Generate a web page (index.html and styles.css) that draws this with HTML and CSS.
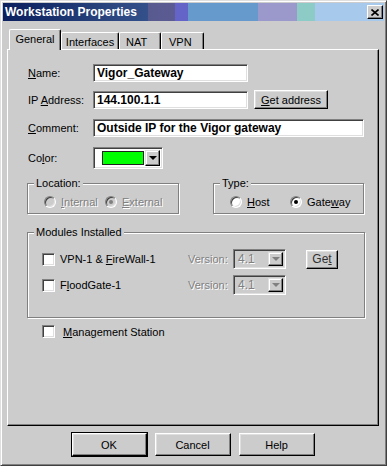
FILE: index.html
```html
<!DOCTYPE html>
<html lang="en">
<head>
  <meta charset="UTF-8" />
  <title>Workstation Properties</title>
  <link rel="stylesheet" href="styles.css">
</head>
<body>
  <div class="window">
    <div class="titlebar">
      <span class="title">Workstation Properties</span>
      <span class="close">
        <svg width="8" height="7" viewBox="0 0 8 7"><path d="M0.5 0.5 L7.5 6.5 M7.5 0.5 L0.5 6.5" stroke="#000" stroke-width="1.6"/></svg>
      </span>
    </div>

    <div class="content">
      <div class="tabs">
        <div class="tab active tab-general">General</div>
        <div class="tab tab-interfaces">Interfaces</div>
        <div class="tab tab-nat">NAT</div>
        <div class="tab tab-vpn">VPN</div>
      </div>

      <div class="panel">
        <div class="row row-name">
          <span class="lbl"><u>N</u>ame:</span>
          <input class="field field-short" value="Vigor_Gateway">
        </div>
        <div class="row row-ip">
          <span class="lbl">IP <u>A</u>ddress:</span>
          <input class="field field-short" value="144.100.1.1">
          <div class="btn btn-getaddr"><u>G</u>et address</div>
        </div>
        <div class="row row-comment">
          <span class="lbl"><u>C</u>omment:</span>
          <input class="field field-long" value="Outside IP for the Vigor gateway">
        </div>
        <div class="row row-color">
          <span class="lbl">Co<u>l</u>or:</span>
          <div class="combo-color">
            <span class="swatch"></span>
            <span class="drop"><span class="arrow"></span></span>
          </div>
        </div>

        <div class="groups">
          <div class="group group-location">
            <div class="legend">Location:</div>
            <div class="opts">
              <div class="opt opt-first disabled"><span class="radio off"></span><span class="opt-text"><u>I</u>nternal</span></div>
              <div class="opt disabled"><span class="radio off checked"></span><span class="opt-text"><u>E</u>xternal</span></div>
            </div>
          </div>
          <div class="group group-type">
            <div class="legend">Type:</div>
            <div class="opts">
              <div class="opt opt-first"><span class="radio"></span><span class="opt-text"><u>H</u>ost</span></div>
              <div class="opt"><span class="radio checked"></span><span class="opt-text">Gate<u>w</u>ay</span></div>
            </div>
          </div>
        </div>

        <div class="group group-modules">
          <div class="legend">Modules Installed</div>
          <div class="module">
            <span class="check"></span>
            <span class="mod-name">VPN-1 &amp; <u>F</u>ireWall-1</span>
            <span class="mod-ver disabled">Version:</span>
            <div class="combo-ver">
              <span class="ver-text">4.1</span>
              <span class="drop"><span class="arrow grey"></span></span>
            </div>
            <div class="btn btn-get">Ge<u>t</u></div>
          </div>
          <div class="module module-2">
            <span class="check"></span>
            <span class="mod-name">F<u>l</u>oodGate-1</span>
            <span class="mod-ver disabled">Version:</span>
            <div class="combo-ver">
              <span class="ver-text">4.1</span>
              <span class="drop"><span class="arrow grey"></span></span>
            </div>
          </div>
        </div>

        <div class="row row-mgmt">
          <span class="check"></span>
          <span class="mgmt-text"><u>M</u>anagement Station</span>
        </div>
      </div>

      <div class="buttons">
        <div class="btn btn-main btn-default">OK</div>
        <div class="btn btn-main">Cancel</div>
        <div class="btn btn-main">Help</div>
      </div>
    </div>
  </div>
</body>
</html>
```

FILE: styles.css
```css
html, body {
  margin: 0;
  padding: 0;
  background-color: #cccccc;
  font-family: "Liberation Sans", Arial, sans-serif;
  font-size: 11px;
  color: #000000;
}
.window {
  width: 387px;
  height: 466px;
  box-sizing: border-box;
  border: 1px solid;
  border-color: #dfdfdf #404040 #404040 #dfdfdf;
  box-shadow: inset 1px 1px #ffffff, inset -1px -1px #808080;
  padding: 2px;
}
.titlebar {
  height: 18px;
  display: flex;
  align-items: center;
  justify-content: space-between;
  background: linear-gradient(to right,
    #0a1f5e 0, #1b3570 60px, #2c4680 110px, #33508a 145px,
    #575a8f 145px, #5c5b93 172px,
    #6464c8 172px, #6464c8 185px,
    #6699cc 185px, #6699cc 255px,
    #9b99cb 255px, #9b99cb 294px,
    #8ccbc6 294px, #8ccbc6 312px,
    #a6c9ec 312px);
}
.title {
  color: #ffffff;
  font-weight: bold;
  font-size: 12px;
  padding-left: 2px;
}
.close {
  width: 14px;
  height: 12px;
  margin-right: 1px;
  background: #cccccc;
  border: 1px solid;
  border-color: #ffffff #000000 #000000 #ffffff;
  box-shadow: inset -1px -1px #808080;
  display: flex;
  align-items: center;
  justify-content: center;
}
.content {
  padding: 0 5px 0 4px;
}
.tabs {
  display: flex;
  align-items: flex-end;
  height: 20px;
  margin-top: 8px;
  padding-left: 2px;
}
.tab {
  height: 17px;
  box-sizing: border-box;
  border: 1px solid;
  border-bottom: none;
  border-color: #ffffff #000000 #ffffff #ffffff;
  box-shadow: inset -1px 0 #808080;
  border-radius: 2px 2px 0 0;
  display: flex;
  align-items: center;
  justify-content: center;
  padding-top: 2px;
}
.tab.active {
  height: 21px;
  margin-bottom: -1px;
  position: relative;
  background: #cccccc;
  padding-top: 0;
  padding-bottom: 2px;
}
.tab-general { width: 52px; }
.tab-interfaces { width: 58px; }
.tab-nat { width: 42px; justify-content: flex-start; padding-left: 6px; }
.tab-vpn { width: 43px; justify-content: flex-start; padding-left: 7px; }

.panel {
  height: 377px;
  box-sizing: border-box;
  border: 1px solid;
  border-color: #ffffff #000000 #000000 #ffffff;
  box-shadow: inset -1px -1px #808080;
  padding: 14px 0 0 20px;
}
.row {
  display: flex;
  align-items: center;
}
.lbl {
  width: 65px;
}
.row-name { height: 18px; }
.row-ip { height: 19px; margin-top: 8px; }
.row-comment { height: 18px; margin-top: 10px; }
.row-color { height: 22px; margin-top: 10px; }

.field {
  height: 18px;
  box-sizing: border-box;
  border: 1px solid;
  border-color: #808080 #ffffff #ffffff #808080;
  box-shadow: inset 1px 1px #404040, inset -1px -1px #dfdfdf;
  background: #ffffff;
  padding: 0 0 0 3px;
  margin: 0;
  font-family: "Liberation Sans", Arial, sans-serif;
  font-size: 12px;
  font-weight: bold;
  color: #000000;
  outline: none;
}
.field-short { width: 155px; }
.field-long { width: 271px; }

.btn {
  background: #cccccc;
  box-sizing: border-box;
  border: 1px solid;
  border-color: #ffffff #000000 #000000 #ffffff;
  box-shadow: inset -1px -1px #808080, inset 1px 1px #dfdfdf;
  display: flex;
  align-items: center;
  justify-content: center;
}
.btn-getaddr {
  width: 74px;
  height: 19px;
  margin-left: 6px;
}

.combo-color {
  width: 70px;
  height: 22px;
  box-sizing: border-box;
  border: 1px solid;
  border-color: #808080 #ffffff #ffffff #808080;
  box-shadow: inset 1px 1px #404040, inset -1px -1px #dfdfdf;
  background: #ffffff;
  display: flex;
  align-items: center;
  justify-content: space-between;
  padding: 2px 2px 2px 8px;
}
.swatch {
  width: 42px;
  height: 14px;
  box-sizing: border-box;
  background: #00ff00;
  border: 1px solid #202020;
}
.drop {
  width: 15px;
  height: 100%;
  box-sizing: border-box;
  background: #cccccc;
  border: 1px solid;
  border-color: #dfdfdf #000000 #000000 #dfdfdf;
  box-shadow: inset -1px -1px #808080, inset 1px 1px #ffffff;
  display: flex;
  align-items: center;
  justify-content: center;
}
.arrow {
  width: 0;
  height: 0;
  border-left: 4px solid transparent;
  border-right: 4px solid transparent;
  border-top: 4px solid #000000;
}
.arrow.grey {
  border-top-color: #808080;
}

.groups {
  display: flex;
  margin: 14px 0 0 -1px;
  gap: 34px;
}
.group {
  box-sizing: border-box;
  border: 1px solid #808080;
  box-shadow: inset 1px 1px #ffffff, 1px 1px #ffffff;
}
.legend {
  width: fit-content;
  margin: -7px 0 0 6px;
  padding: 0 2px;
  height: 13px;
  line-height: 13px;
  background: #cccccc;
}
.group-location { width: 152px; height: 31px; }
.group-type { width: 151px; height: 31px; }
.opts {
  display: flex;
  align-items: center;
  height: 12px;
  margin-top: 6px;
  padding-left: 16px;
}
.opt {
  display: flex;
  align-items: center;
}
.opt-first { width: 61px; }
.group-type .opt-first { width: 60px; }
.opt-text { margin-left: 5px; }
.radio {
  width: 12px;
  height: 12px;
  box-sizing: border-box;
  border-radius: 50%;
  border: 1px solid;
  border-color: #808080 #ffffff #ffffff #808080;
  box-shadow: inset 1px 1px #404040, inset -1px -1px #dfdfdf;
  background: #ffffff;
  display: flex;
  align-items: center;
  justify-content: center;
}
.radio.checked::after {
  content: "";
  width: 4px;
  height: 4px;
  border-radius: 50%;
  background: #000000;
}
.radio.off {
  background: #cccccc;
}
.radio.off.checked::after {
  background: #808080;
}
.disabled {
  color: #808080;
  text-shadow: 1px 1px #ffffff;
}

.group-modules {
  width: 338px;
  height: 86px;
  margin: 18px 0 0 -1px;
}
.module {
  display: flex;
  align-items: center;
  height: 20px;
  margin-top: 10px;
  padding-left: 14px;
}
.module-2 { margin-top: 6px; }
.check {
  width: 13px;
  height: 13px;
  box-sizing: border-box;
  border: 1px solid;
  border-color: #808080 #ffffff #ffffff #808080;
  box-shadow: inset 1px 1px #404040, inset -1px -1px #dfdfdf;
  background: #ffffff;
}
.mod-name {
  width: 128px;
  margin-left: 5px;
}
.mod-ver { width: 45px; }
.combo-ver {
  width: 53px;
  height: 20px;
  box-sizing: border-box;
  border: 1px solid;
  border-color: #808080 #ffffff #ffffff #808080;
  box-shadow: inset 1px 1px #404040, inset -1px -1px #dfdfdf;
  background: #cccccc;
  display: flex;
  align-items: center;
  justify-content: space-between;
  padding: 2px 2px 2px 4px;
}
.ver-text {
  color: #808080;
  text-shadow: 1px 1px #ffffff;
  font-size: 12px;
}
.btn-get {
  width: 32px;
  height: 19px;
  margin-left: 20px;
  color: #303030;
  font-size: 12px;
}

.row-mgmt {
  height: 13px;
  margin-top: 7px;
  padding-left: 14px;
}
.mgmt-text { margin-left: 8px; }

.buttons {
  display: flex;
  justify-content: center;
  gap: 8px;
  margin-top: 7px;
}
.btn-main {
  width: 76px;
  height: 23px;
}
.btn-default {
  outline: 1px solid #000000;
  outline-offset: 0;
  width: 75px;
}
```
